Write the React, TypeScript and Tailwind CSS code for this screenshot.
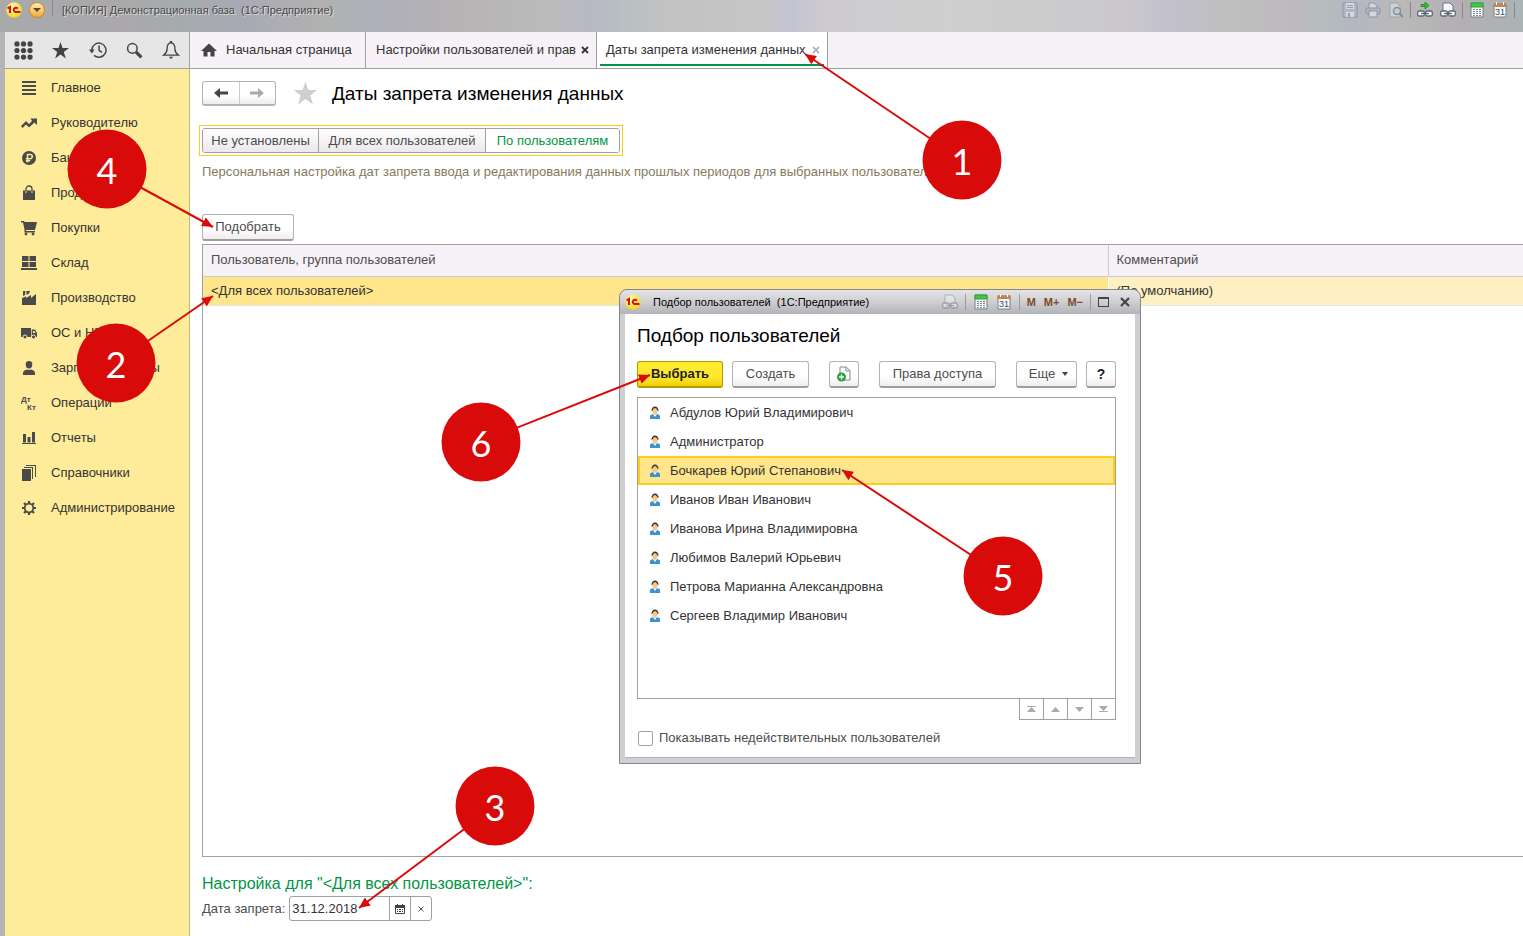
import { InputHTMLAttributes, ButtonHTMLAttributes, ReactNode, useState } from 'react'
import { clsx } from 'clsx'

type TIconProps = { children: ReactNode; size?: number; className?: string }

function Icon({ children, size = 16, className }: TIconProps) {
  return (
    <svg width={size} height={size} viewBox="0 0 16 16" fill="currentColor" className={clsx('shrink-0', className)} aria-hidden="true">
      {children}
    </svg>
  )
}

const menu = [
  { title: 'Главное', icon: <path d="M1 1h14v2H1zM1 5h14v2H1zM1 9h14v2H1zM1 13h14v2H1z" /> },
  { title: 'Руководителю', icon: <path d="M0 11l5-5 3 3 3-3L9.500 3.500H16V10l-2.500-2.500L8 12.500 5 9.500 1.500 13z" /> },
  {
    title: 'Банк и касса',
    icon: (
      <>
        <circle cx="8" cy="8" r="7" />
        <path d="M6.500 12.500V4.500h2.700a2.100 2.100 0 010 4.200H4.800M4.800 10.700h4.400" fill="none" stroke="#ffec9b" strokeWidth="1.500" />
      </>
    ),
  },
  {
    title: 'Продажи',
    icon: (
      <>
        <path d="M2 5.500h12V15H2z" />
        <path d="M5 8V4a3 3 0 016 0v4" fill="none" stroke="currentColor" strokeWidth="1.300" />
        <path d="M5 6v2M11 6v2" stroke="#ffec9b" strokeWidth="1" />
      </>
    ),
  },
  {
    title: 'Покупки',
    icon: (
      <>
        <path d="M0 1h3l.6 1H16l-2 8H5v1h9v1.500H3.500V9.500L2 2.500H0z" />
        <circle cx="5" cy="14" r="1.400" />
        <circle cx="12" cy="14" r="1.400" />
      </>
    ),
  },
  { title: 'Склад', icon: <path d="M1 1h6.500v5H1zM8.500 1H15v5H8.500zM1 7h6.500v5H1zM8.500 7H15v5H8.500zM0 13h16v2H0z" /> },
  { title: 'Производство', icon: <path d="M1 15V8l3-1 1-1v2l5-3v3l5-4v11zM2 1h2.500L4 5 2 6zM5.500 1H9L8 3.500 5.500 5z" /> },
  {
    title: 'ОС и НМА',
    icon: (
      <>
        <path d="M0 3h10v9H0zM10.700 4.500H14l2 3.500v4h-5.300z" />
        <path d="M12 6h1.500l1 2H12z" fill="#ffec9b" />
        <circle cx="4" cy="12" r="2" stroke="#ffec9b" />
        <circle cx="12.500" cy="12" r="2" stroke="#ffec9b" />
      </>
    ),
  },
  { title: 'Зарплата и кадры', icon: <path d="M8 1a3.300 3.300 0 013.300 3.500C11.300 7 10 8.500 8 8.500S4.700 7 4.700 4.500A3.300 3.300 0 018 1zM2 15v-2c0-2 2-3 4-3.500l2 .5 2-.5c2 .5 4 1.500 4 3.500v2z" /> },
  {
    title: 'Операции',
    icon: (
      <>
        <text x="0" y="7" fontSize="8" fontWeight="bold" fontFamily="Liberation Sans, sans-serif">Дт</text>
        <text x="6" y="15" fontSize="8" fontWeight="bold" fontFamily="Liberation Sans, sans-serif">Кт</text>
      </>
    ),
  },
  { title: 'Отчеты', icon: <path d="M2 4h3v8.500H2zM6.500 7h3v5.500h-3zM11 2h3v10.500h-3zM1 13h14v1H1z" /> },
  { title: 'Справочники', icon: <path d="M1 4h9v12H1zM3 2h9v12h-1V3H3zM5 0h10v12h-1V1H5z" /> },
  {
    title: 'Администрирование',
    icon: (
      <g fill="none" stroke="currentColor">
        <circle cx="8" cy="8" r="4.300" strokeWidth="1.800" />
        <path d="M8 1v2.500M8 12.500V15M1 8h2.500M12.500 8H15M3 3l1.800 1.800M11.200 11.200L13 13M3 13l1.800-1.800M11.200 4.800L13 3" strokeWidth="2.200" />
      </g>
    ),
  },
]

const users = [
  'Абдулов Юрий Владимирович',
  'Администратор',
  'Бочкарев Юрий Степанович',
  'Иванов Иван Иванович',
  'Иванова Ирина Владимировна',
  'Любимов Валерий Юрьевич',
  'Петрова Марианна Александровна',
  'Сергеев Владимир Иванович',
]

const steps = [
  { id: 1, x: 962, y: 160, toX: 805, toY: 54 },
  { id: 2, x: 116, y: 363, toX: 213, toY: 296 },
  { id: 3, x: 495, y: 806, toX: 359, toY: 908 },
  { id: 4, x: 107, y: 169, toX: 213, toY: 227 },
  { id: 5, x: 1003, y: 576, toX: 842, toY: 470 },
  { id: 6, x: 481, y: 442, toX: 650, toY: 375 },
]

function Logo() {
  return (
    <svg width="16" height="16" viewBox="0 0 16 16" className="shrink-0" aria-label="1С">
      <defs>
        <radialGradient id="logo" cx="40%" cy="30%" r="70%">
          <stop offset="0" stopColor="#fffbc0" />
          <stop offset="1" stopColor="#f8d31c" />
        </radialGradient>
      </defs>
      <circle cx="8" cy="8" r="7.800" fill="url(#logo)" />
      <path d="M1.500 6.300L4 5v6" fill="none" stroke="#d9140c" strokeWidth="2" />
      <path d="M11.800 6.600A2.200 2.200 0 109.500 10H14.500" fill="none" stroke="#d9140c" strokeWidth="2" />
    </svg>
  )
}

function Calculator() {
  return (
    <Icon>
      <path d="M2 1h12v14H2z" fill="#f3f7f8" stroke="#71828c" />
      <path d="M2 1h12v4H2z" fill="#3fc94c" stroke="#2fa03a" />
      <path d="M4 7h2v1H4zM7 7h2v1H7zM4 9h2v1H4zM7 9h2v1H7zM10 9h2v1h-2zM4 11h2v1H4zM7 11h2v1H7zM10 11h2v1h-2zM4 13h2v1H4zM7 13h2v1H7zM10 13h2v1h-2z" fill="#7f8e96" />
      <path d="M10 7h2v1h-2z" fill="#e33" />
    </Icon>
  )
}

function Calendar() {
  return (
    <Icon>
      <path d="M2 2h12v13H2z" fill="#f8fbfd" stroke="#71828c" />
      <path d="M1.500 1.500h13V5h-13z" fill="#c98252" />
      <path d="M4 0h1v3H4zM11 0h1v3h-1z" fill="#fff" />
      <text x="8" y="13" textAnchor="middle" fontSize="9" fontFamily="Liberation Sans, sans-serif" fill="#3e4c55">31</text>
    </Icon>
  )
}

function Link({ arrow }: { arrow?: boolean }) {
  return (
    <Icon>
      {arrow
        ? <path d="M4 2.500h4V0l4 3.500L8 7V4.500H4z" fill="#22c522" stroke="#127512" strokeWidth=".6" />
        : <path d="M3 9V1h7l3 3v5" fill="#f4f7f9" stroke="#66788a" />}
      <rect x=".7" y="9" width="6.600" height="5" rx="1.500" fill="#fff" stroke="#5b6770" strokeWidth="1.300" />
      <rect x="8.700" y="9" width="6.600" height="5" rx="1.500" fill="#fff" stroke="#5b6770" strokeWidth="1.300" />
      <path d="M4 11.500h8" stroke="#5b6770" strokeWidth="1.300" />
    </Icon>
  )
}

function UserIcon() {
  return (
    <svg width="12" height="14" viewBox="0 0 12 14" className="shrink-0" aria-hidden="true">
      <path d="M1 13v-3C1 8.700 3 8.500 4.500 8h3C9 8.500 11 8.700 11 10v3z" fill="#3a93cc" />
      <path d="M4 8l2 3 2-3z" fill="#fff" />
      <path d="M2.500 5C2.500 2 4 .5 6 .5S9.500 2 9.500 5z" fill="#3b3530" />
      <path d="M3.200 4.500C4 4 4.500 3 4.800 2.300h2.400C7.500 3 8 4 8.800 4.500 8.800 7 7.500 8.700 6 8.700S3.200 7 3.200 4.500z" fill="#f4c78c" />
    </svg>
  )
}

function ToolButton({ className, ...props }: ButtonHTMLAttributes<HTMLButtonElement>) {
  return (
    <button
      type="button"
      className={clsx('flex h-[27px] items-center justify-center rounded-[3px] border border-b-2 border-[#b3b3b3] border-b-[#9d9d9d] bg-gradient-to-b from-white from-60% to-[#f0ebef]', className)}
      {...props}
    />
  )
}

function Checkbox({ id, ...props }: InputHTMLAttributes<HTMLInputElement>) {
  return <input id={id} type="checkbox" className="size-[15px] appearance-none rounded-xs border border-[#a0a0a0] bg-white checked:bg-[#ffdc00]" {...props} />
}

function TitleBar() {
  return (
    <header className="flex h-8 items-start justify-between bg-[linear-gradient(90deg,#a9a9a9_0%,#a7a9ab_3%,#aba8ab_8%,#a5abad_12%,#a9a9b5_16%,#b1b1b1_21%,#adb3b5_23%,#afafb9_25%,#b6b3b5_30%,#bbbbbb_36%,#b8b8c6_39%,#b9bfc2_41%,#c3c2c3_44%,#c6c6c5_50%,#c3c4d2_52%,#cdcbcf_54%,#cfcfcf_62%,#cac8cb_74%,#c1c0cc_77%,#bfbfbe_81%,#bdb9be_85%,#b3bcbe_87%,#b6b6c2_89%,#b9b9b8_92%,#b3afb3_96%,#aab4b4_100%)] pr-2">
      <div className="flex items-start gap-[7px] pl-[6px]">
        <div className="pt-[2px]"><Logo /></div>
        <button type="button" aria-label="Меню" className="mt-[2px] flex size-4 items-center justify-center rounded-full border border-[#c98a28] bg-gradient-to-b from-[#ffe9b0] to-[#f5a92c]">
          <svg width="8" height="4" viewBox="0 0 8 4" aria-hidden="true"><path d="M0 0h8L4 4z" fill="#5c4a26" /></svg>
        </button>
        <span className="h-4 border-l border-[#8c8c8c]" />
        <span className="pt-[3px] pl-[2px] text-[11px] leading-[14px] whitespace-pre text-[#4a4a4a] [text-shadow:1px_1px_0_#dedede]">[КОПИЯ] Демонстрационная база  (1С:Предприятие)</span>
      </div>
      <div className="flex items-start gap-[6px] pt-[2px]">
        <div className="flex gap-[7px] text-[#7f8fa3] opacity-60">
          <Icon>
            <path d="M1 1h14v14H1z" fill="#a9b8cb" stroke="#6d7f96" />
            <path d="M4 1h8v6H4zM4 10h8v5H4z" fill="#e8edf2" />
            <path d="M5 3h6v1H5zM5 5h6v1H5zM6 11h2v4H6z" />
          </Icon>
          <Icon>
            <path d="M4 6V1h5l3 3v2" fill="#e8edf2" stroke="#6d7f96" />
            <rect x="1" y="6" width="14" height="6" rx="1" fill="#a9b8cb" stroke="#6d7f96" />
            <path d="M4 9h8v6H4z" fill="#e8edf2" stroke="#6d7f96" />
          </Icon>
          <Icon>
            <path d="M2 1h7l3 3v11H2z" fill="#dde4ea" stroke="#8796a8" />
            <circle cx="9" cy="9" r="3.500" fill="#c5d8e6" stroke="#5f7389" strokeWidth="1.500" />
            <path d="M11.500 11.500L15 15" stroke="#5f7389" strokeWidth="2" />
          </Icon>
        </div>
        <span className="h-4 border-l border-[#85858a]" />
        <div className="flex gap-[7px]">
          <Link arrow />
          <Link />
        </div>
        <span className="h-4 border-l border-[#85858a]" />
        <div className="flex gap-[7px]">
          <Calculator />
          <Calendar />
        </div>
        <span className="h-4 border-l border-[#85858a]" />
      </div>
    </header>
  )
}

function TopBar() {
  return (
    <div className="flex h-[37px] border-b border-[#a0a0a0] bg-[#f7f2f7]">
      <div className="flex w-[185px] items-center justify-between border-r border-[#a0a0a0] bg-[#e6e6e6] px-[9px] text-[#444]">
        <button type="button" aria-label="Разделы">
          <Icon size={19}>
            {[2.500, 8, 13.500].map(y => [2.500, 8, 13.500].map(x => <circle key={`${x}-${y}`} cx={x} cy={y} r="2.200" />))}
          </Icon>
        </button>
        <button type="button" aria-label="Избранное">
          <Icon size={17}><path d="M8 0l1.900 5.700H16l-4.900 3.600L13 15.500 8 11.800 3 15.500l1.900-6.200L0 5.700h6.100z" /></Icon>
        </button>
        <button type="button" aria-label="История">
          <Icon size={18}>
            <path d="M2.500 8A6.300 6.300 0 114.500 12.800M9 4v4.500l2.500 1.500" fill="none" stroke="currentColor" strokeWidth="1.300" />
            <path d="M0 7.500h5L2.500 11z" />
          </Icon>
        </button>
        <button type="button" aria-label="Поиск">
          <Icon size={17}>
            <circle cx="6" cy="6" r="4.500" fill="none" stroke="currentColor" strokeWidth="1.400" />
            <path d="M9.500 9.500L14.500 14.500" stroke="currentColor" strokeWidth="3" />
          </Icon>
        </button>
        <button type="button" aria-label="Оповещения">
          <Icon size={18}>
            <path d="M8 1.500C5 2 4.500 4 4.500 7S3.500 11 1.500 12.500h13C12.500 11 11.500 10 11.500 7S11 2 8 1.500z" fill="none" stroke="currentColor" strokeWidth="1.200" />
            <path d="M6 14h4l-2 2zM7 0h2v2H7z" />
          </Icon>
        </button>
      </div>
      <nav className="flex text-[#333]">
        <a href="#home" className="flex w-[176px] items-center gap-[9px] border-r border-[#a0a0a0] pl-[11px]">
          <Icon className="text-[#444]"><path d="M8 1.500L16 9h-2.500v5.500h-4V10h-3v4.500h-4V9H0z" /></Icon>
          Начальная страница
        </a>
        <div className="flex w-[231px] items-center justify-between border-r border-[#a0a0a0] pr-[7px] pl-[10px]">
          <a href="#rights" className="whitespace-nowrap">Настройки пользователей и прав</a>
          <CloseButton />
        </div>
        <div className="relative flex w-[231px] items-center justify-between border-r border-[#a0a0a0] bg-white pr-[7px] pl-[9px]">
          <a href="#dates" className="whitespace-nowrap">Даты запрета изменения данных</a>
          <CloseButton className="text-[#b5b5b5]" />
          <span className="absolute right-[3px] bottom-[2px] left-[3px] h-[2px] bg-[#009646]" />
        </div>
      </nav>
    </div>
  )
}

function CloseButton({ className }: { className?: string }) {
  return (
    <button type="button" aria-label="Закрыть" className={className}>
      <svg width="8" height="8" viewBox="0 0 8 8" aria-hidden="true"><path d="M1 1l6 6M7 1L1 7" stroke="currentColor" strokeWidth="1.800" /></svg>
    </button>
  )
}

function Arrow({ back }: { back?: boolean }) {
  return (
    <svg width="14" height="10" viewBox="0 0 14 10" fill="currentColor" className={back ? 'text-[#444]' : 'rotate-180 text-[#aaa]'} aria-hidden="true">
      <path d="M0 5l6-5v3.500h8v3H6V10z" />
    </svg>
  )
}

function PickUsersDialog() {
  const [selected, setSelected] = useState(2)
  const [showInvalid, setShowInvalid] = useState(false)

  return (
    <section role="dialog" aria-label="Подбор пользователей" className="absolute top-[289px] left-[619px] w-[522px] rounded-t-lg border border-[#85858a] bg-[#cdcfd3] px-[5px] pb-[5px]">
      <div className="-mx-[5px] flex h-6 items-center justify-between rounded-t-lg bg-gradient-to-b from-[#e4e4e6] via-[#cfcfd2] to-[#b2b3b8] pr-[10px] pl-[5px]">
        <div className="flex items-center gap-3">
          <Logo />
          <span className="text-[11px] whitespace-pre text-black">Подбор пользователей  (1С:Предприятие)</span>
        </div>
        <div className="flex items-center gap-[7px]">
          <span className="opacity-40"><Link /></span>
          <span className="h-4 border-l border-[#9a9aa0]" />
          <Calculator />
          <Calendar />
          <span className="h-4 border-l border-[#9a9aa0]" />
          <div className="flex gap-2 text-[11px] font-bold text-[#7b4a2b]">
            <button type="button">M</button>
            <button type="button">M+</button>
            <button type="button">M−</button>
          </div>
          <span className="h-4 border-l border-[#9a9aa0]" />
          <button type="button" aria-label="Развернуть" className="h-[10px] w-[11px] border border-t-2 border-[#444]" />
          <button type="button" aria-label="Закрыть" className="pl-1 text-[#444]">
            <svg width="10" height="10" viewBox="0 0 10 10" aria-hidden="true"><path d="M1 1l8 8M9 1L1 9" stroke="currentColor" strokeWidth="2.200" /></svg>
          </button>
        </div>
      </div>
      <div className="border-b border-[#b0b4b8] bg-white px-3 pt-[10px] pb-[11px]">
        <h2 className="text-[19px] leading-6 text-black">Подбор пользователей</h2>
        <div className="mt-[13px] flex justify-between pr-[7px]">
          <div className="flex">
            <ToolButton className="w-[86px] border-[#b09c00]! bg-linear-to-b! from-[#ffe92e]! to-[#f2cf00]! font-bold text-[#222]">Выбрать</ToolButton>
            <ToolButton className="ml-[9px] w-[77px]">Создать</ToolButton>
            <ToolButton aria-label="Создать копированием" className="ml-5 w-[30px]">
              <Icon>
                <path d="M4 1h6l4 3.500V14H4z" fill="#fff" stroke="#7a8a96" />
                <path d="M10 1v4h4" fill="none" stroke="#7a8a96" />
                <circle cx="5.500" cy="11" r="4.500" fill="#27a243" />
                <path d="M5.500 8.500v5M3 11h5" stroke="#fff" strokeWidth="1.300" />
              </Icon>
            </ToolButton>
            <ToolButton className="ml-5 w-[117px]">Права доступа</ToolButton>
          </div>
          <div className="flex gap-[9px]">
            <ToolButton className="w-[61px] gap-[7px] pl-1">
              Еще
              <svg width="6" height="4" viewBox="0 0 6 4" aria-hidden="true"><path d="M0 0h6L3 4z" fill="#444" /></svg>
            </ToolButton>
            <ToolButton className="w-[30px] text-sm font-bold text-[#222]">?</ToolButton>
          </div>
        </div>
        <div className="mt-[9px] mr-[7px]">
          <ul className="h-[302px] border border-[#a0a0a0]">
            {users.map((user, index) => (
              <li key={user}>
                <button
                  type="button"
                  onClick={() => setSelected(index)}
                  className={clsx('flex h-[29px] w-full items-center gap-[9px] border-2 pl-[9px] text-[#333]', index === selected ? 'border-[#ffcc1a] bg-[#ffe68c]' : 'border-transparent')}
                >
                  <UserIcon />
                  {user}
                </button>
              </li>
            ))}
          </ul>
          <div className="-mt-px flex justify-end text-[#aaa]">
            {[
              { label: 'В начало', path: 'M0 0h9v1H0zM4.500 1L9 6H0z' },
              { label: 'Вверх', path: 'M4.500 1L9 6H0z' },
              { label: 'Вниз', path: 'M0 1h9L4.500 6z' },
              { label: 'В конец', path: 'M0 0h9L4.500 5zM0 5h9v1H0z' },
            ].map(nav => (
              <button key={nav.label} type="button" aria-label={nav.label} className="-ml-px flex h-[22px] w-[25px] items-center justify-center border border-[#a0a0a0]">
                <svg width="9" height="6" viewBox="0 0 9 6" fill="currentColor" aria-hidden="true"><path d={nav.path} /></svg>
              </button>
            ))}
          </div>
        </div>
        <div className="mt-[10px] flex items-center gap-[6px] pl-px leading-4">
          <Checkbox id="showInvalid" checked={showInvalid} onChange={e => setShowInvalid(e.target.checked)} />
          <label htmlFor="showInvalid">Показывать недействительных пользователей</label>
        </div>
      </div>
    </section>
  )
}

function Steps() {
  return (
    <div className="pointer-events-none absolute inset-0">
      <svg className="absolute inset-0 size-full overflow-visible" aria-hidden="true">
        <defs>
          <marker id="tip" viewBox="0 0 11 10" refX="11" refY="5" markerWidth="11" markerHeight="10" markerUnits="userSpaceOnUse" orient="auto">
            <path d="M11 5L0 0v10z" fill="#d90a0a" />
          </marker>
        </defs>
        {steps.map(step => (
          <line key={step.id} x1={step.x} y1={step.y} x2={step.toX} y2={step.toY} stroke="#d90a0a" strokeWidth="2" markerEnd="url(#tip)" />
        ))}
      </svg>
      {steps.map(step => (
        <span
          key={step.id}
          style={{ left: step.x, top: step.y }}
          className="absolute flex size-[79px] -translate-1/2 items-center justify-center rounded-full bg-[#d90a0a] font-['Lato',sans-serif] text-4xl text-white"
        >
          {step.id}
        </span>
      ))}
    </div>
  )
}

export default function App() {
  const [mode, setMode] = useState(2)
  const [date, setDate] = useState('31.12.2018')

  return (
    <div className="relative flex min-h-screen flex-col overflow-hidden bg-white font-['Liberation_Sans',Arial,sans-serif] text-[13px] leading-4 text-[#4d4d4d]">
      <TitleBar />
      <div className="flex flex-1 flex-col border-l-[5px] border-[#b5b5b8]">
        <TopBar />
        <div className="flex flex-1">
          <nav className="w-[185px] shrink-0 border-r border-[#c4b878] bg-[#ffec9b] pt-px text-[#333]">
            {menu.map(item => (
              <a key={item.title} href="#section" className="flex h-[35px] items-center gap-[14px] pl-4 whitespace-nowrap">
                <Icon className="text-[#4a4a4a]">{item.icon}</Icon>
                {item.title}
              </a>
            ))}
          </nav>
          <main className="flex min-w-0 flex-1 flex-col pt-3 pb-[15px] pl-3">
            <div className="flex items-center">
              <div className="flex h-[25px] w-[74px] rounded-[3px] border border-b-2 border-[#b3b3b3] bg-gradient-to-b from-white from-60% to-[#f0ebef]">
                <button type="button" aria-label="Назад" className="flex flex-1 items-center justify-center border-r border-[#ccc]"><Arrow back /></button>
                <button type="button" aria-label="Вперед" className="flex flex-1 items-center justify-center"><Arrow /></button>
              </div>
              <button type="button" aria-label="В избранное" className="ml-[17px]">
                <Icon size={25} className="text-[#cfcfcf]"><path d="M8 .5l1.900 5.200H15.500l-4.400 3.500L12.800 15 8 11.500 3.200 15l1.700-5.800L.5 5.700h5.600z" /></Icon>
              </button>
              <h1 className="ml-[14px] text-[19px] leading-6 text-black">Даты запрета изменения данных</h1>
            </div>

            <div className="-ml-[3px] mt-[19px] self-start border border-[#ffcc1a] p-[2px]">
              <div className="flex h-[25px] overflow-hidden rounded-[3px] border border-[#a0a0a0]">
                {[
                  { label: 'Не установлены', width: 'w-[115px]' },
                  { label: 'Для всех пользователей', width: 'w-[167px]' },
                  { label: 'По пользователям', width: 'w-[134px]' },
                ].map((item, index) => (
                  <button
                    key={item.label}
                    type="button"
                    onClick={() => setMode(index)}
                    className={clsx('whitespace-nowrap', item.width, index > 0 && 'border-l border-[#a0a0a0]', index === mode ? 'bg-white text-[#009646]' : 'bg-gradient-to-b from-white to-[#ece8ec]')}
                  >
                    {item.label}
                  </button>
                ))}
              </div>
            </div>
            <p className="mt-2 whitespace-nowrap text-[#857a5c]">Персональная настройка дат запрета ввода и редактирования данных прошлых периодов для выбранных пользователей</p>

            <ToolButton className="mt-[34px] w-[92px] self-start">Подобрать</ToolButton>
            <div className="mt-[3px] flex-1 border border-r-0 border-[#a0a0a0]">
              <table className="w-full table-fixed border-collapse text-left">
                <thead>
                  <tr className="h-[31px] border-b border-[#ccc] bg-[#f7f2f7]">
                    <th className="border-r border-[#ccc] px-2 font-normal">Пользователь, группа пользователей</th>
                    <th className="w-[415px] px-2 font-normal">Комментарий</th>
                  </tr>
                </thead>
                <tbody>
                  <tr className="h-[29px] border-b border-[#e5e5e5] text-[#333]">
                    <td className="border-r border-white bg-[#ffe68c] px-2">&lt;Для всех пользователей&gt;</td>
                    <td className="bg-[#fff0c3] px-2">(По умолчанию)</td>
                  </tr>
                </tbody>
              </table>
            </div>

            <h2 className="mt-[17px] text-base leading-5 text-[#009646]">Настройка для "&lt;Для всех пользователей&gt;":</h2>
            <div className="mt-[2px] flex items-center gap-1">
              <label htmlFor="banDate">Дата запрета:</label>
              <div className="flex h-[25px] w-[143px] rounded-[3px] border border-[#a0a0a0]">
                <input id="banDate" value={date} onChange={e => setDate(e.target.value)} className="w-[99px] px-[2px] text-[#333] outline-none" />
                <button type="button" aria-label="Выбрать дату" className="flex w-[21px] items-center justify-center border-l border-[#a0a0a0]">
                  <svg width="10" height="10" viewBox="0 0 10 10" aria-hidden="true">
                    <path d="M.5 1.500h9v8h-9z" fill="none" stroke="#444" />
                    <path d="M0 1h10v3H0zM2 0h1v2H2zM7 0h1v2H7zM2 5h1v1H2zM4 5h2v1H4zM7 5h1v1H7zM2 7h1v1H2zM4 7h2v1H4zM7 7h1v1H7z" fill="#444" />
                  </svg>
                </button>
                <button type="button" aria-label="Очистить" onClick={() => setDate('')} className="flex flex-1 items-center justify-center border-l border-[#a0a0a0]">
                  <svg width="6" height="6" viewBox="0 0 6 6" aria-hidden="true"><path d="M.5.5l5 5M5.500.5l-5 5" stroke="#555" /></svg>
                </button>
              </div>
            </div>
          </main>
        </div>
      </div>
      <PickUsersDialog />
      <Steps />
    </div>
  )
}
